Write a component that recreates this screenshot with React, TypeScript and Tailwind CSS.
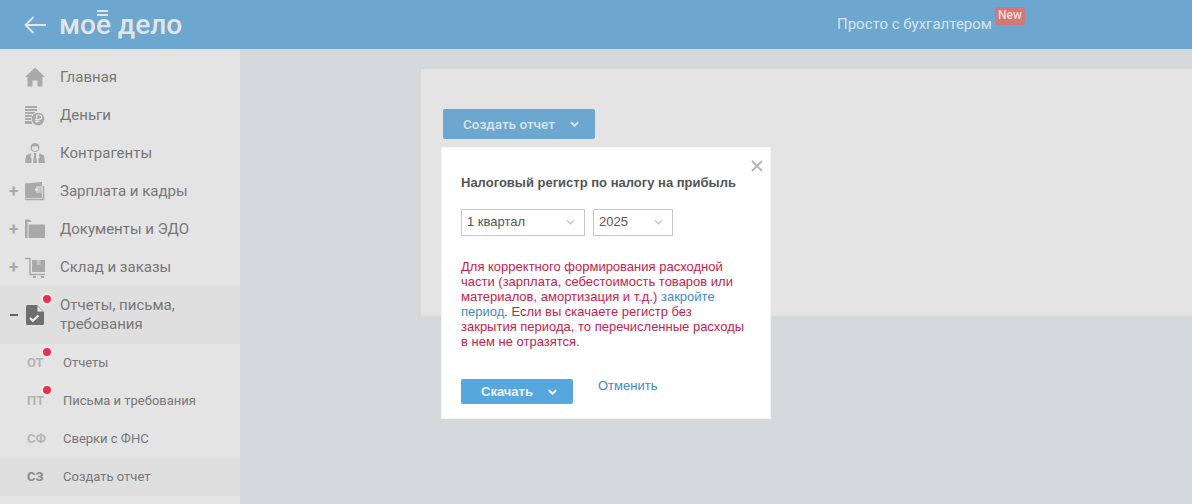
import React from "react";

const Chevron = ({ className }: { className: string }) => (
  <svg viewBox="0 0 10 6" className={className} fill="none" stroke="currentColor" strokeWidth="1.6">
    <path d="M1 1l4 4 4-4" />
  </svg>
);

const BoldChevron = ({ className }: { className: string }) => (
  <svg viewBox="0 0 10 6" className={className} fill="none" stroke="currentColor" strokeWidth="2.2">
    <path d="M1 1l4 4 4-4" />
  </svg>
);

const iconClass = "w-5 h-5 text-[#a9a9a9]";

const HomeIcon = () => (
  <svg viewBox="0 0 20 20" className={iconClass} fill="currentColor">
    <path d="M10 0.5L0 10h2.5v9.5h5v-6h5v6h5V10H20z" />
  </svg>
);

const MoneyIcon = () => (
  <svg viewBox="0 0 20 21" className="w-5 h-[21px] text-[#a9a9a9]" fill="currentColor">
    <path d="M0 1h12v2H0zM0 4h12v2H0zM0 7h10v2H0zM0 10h7v2H0zM0 13h6v2H0zM0 16h7v3H0z" />
    <circle cx="13" cy="14" r="7" fill="#e4e4e4" />
    <circle cx="13" cy="14" r="6.3" />
    <path d="M11.800 18V10h2.500a2.200 2.200 0 010 4.600H10M10 16.500h4.500" fill="none" stroke="#e4e4e4" strokeWidth="1.200" />
  </svg>
);

const PersonIcon = () => (
  <svg viewBox="0 0 20 20" className={iconClass} fill="currentColor">
    <path d="M10 0a4.500 4.500 0 014.500 4.500A4.500 4.500 0 0110 9a4.500 4.500 0 01-4.500-4.500A4.500 4.500 0 0110 0zM7 3.500v1.500a3 3 0 006 0V3.500z" fillRule="evenodd" />
    <path d="M6 10L1 12.500 0 20h6.500V15h-1zM14 10l5 2.500 1 7.500h-6.500V15h1zM8.500 10h3L11 12l1 8H8l1-8z" />
  </svg>
);

const WalletIcon = () => (
  <svg viewBox="0 0 20 20" className={iconClass} fill="currentColor">
    <path d="M0 2.500L17 1v4.500H11v6h6V17H0z" />
    <path d="M11 5.500h6v6h-6z" fill="#c8c8c8" />
    <circle cx="11.500" cy="8.500" r="1.600" fill="#e4e4e4" />
    <path d="M18.500 5v13.500H0" fill="none" stroke="currentColor" strokeWidth="1.500" />
  </svg>
);

const FolderIcon = () => (
  <svg viewBox="0 0 20 20" className={iconClass} fill="currentColor">
    <path d="M0 1.500A1 1 0 011 .500h4l1.500 2.500h-4v16H1a1 1 0 01-1-1z" />
    <path d="M3.500 5.500h15.500a1 1 0 011 1V18a1 1 0 01-1 1H3.500z" />
  </svg>
);

const CartIcon = () => (
  <svg viewBox="0 0 20 21" className="w-5 h-[21px] text-[#a9a9a9]" fill="currentColor">
    <path d="M0 1.500h5V17.500h15" fill="none" stroke="currentColor" strokeWidth="1.500" />
    <path d="M7 3h13v12H7z" />
    <path d="M11.500 3h4v5h-4z" fill="#c4c4c4" />
    <path d="M8 19h3v2H8zM16 19h3v2h-3z" />
  </svg>
);

const ReportIcon = () => (
  <svg viewBox="0 0 18 20" className="w-[18px] h-5 text-[#6e6e6e]" fill="currentColor">
    <path d="M1.500 0H11l7 7v11.500a1.500 1.500 0 01-1.500 1.500h-15A1.500 1.500 0 010 18.500v-17A1.500 1.500 0 011.500 0z" />
    <path d="M11.500 1v5.500H17z" fill="#e8e8e8" />
    <path d="M4 13l2.800 2.800 5.700-5.300" fill="none" stroke="#f2f2f2" strokeWidth="2" />
  </svg>
);

const Dot = ({ className }: { className: string }) => (
  <span className={`absolute w-[8px] h-[8px] rounded-full bg-[#e8304f] shadow-[0_0_0_2px_#ececec] ${className}`} />
);

const mainItems = [
  { label: "Главная", icon: <HomeIcon /> },
  { label: "Деньги", icon: <MoneyIcon /> },
  { label: "Контрагенты", icon: <PersonIcon /> },
  { label: "Зарплата и кадры", icon: <WalletIcon />, plus: true },
  { label: "Документы и ЭДО", icon: <FolderIcon />, plus: true },
  { label: "Склад и заказы", icon: <CartIcon />, plus: true },
];

const subItems = [
  { code: "ОТ", label: "Отчеты", dot: true },
  { code: "ПТ", label: "Письма и требования", dot: true },
  { code: "СФ", label: "Сверки с ФНС" },
  { code: "СЗ", label: "Создать отчет", active: true },
];

export default function App() {
  return (
    <div className="w-[1192px] h-[504px] overflow-hidden flex flex-col bg-[#d6d9dc] font-['Roboto',sans-serif]">
      {/* шапка */}
      <header className="h-[49px] shrink-0 bg-[#6ca7cf] flex items-center">
        <svg viewBox="0 0 22 18" className="w-[22px] h-[18px] ml-[24px] text-[#e4e4e4]" fill="none" stroke="currentColor" strokeWidth="1.800">
          <path d="M22 9H1.500M9.500 1L1.500 9l8 8" />
        </svg>
        <div className="relative ml-[13px] w-[123px] text-[28px] leading-[49px] font-medium text-[#e4e4e4] font-['Roboto',sans-serif] whitespace-nowrap">
          мое дело
          <span className="absolute left-[38px] top-[10px] w-[11px] h-[6px] border-y-2 border-[#e4e4e4]" />
        </div>
        <div className="relative ml-[655px] text-[15px] text-[#d9e4ea]">
          Просто с бухгалтером
          <span className="absolute left-[158px] -top-[6px] h-[18px] w-[30px] text-center rounded-[3px] bg-[#d67777] text-[12px] leading-[17px] font-medium text-[#ecdcdc]">
            New
          </span>
        </div>
      </header>

      <div className="flex flex-1 min-h-0">
        {/* меню */}
        <aside className="w-[240px] shrink-0 bg-[#e4e4e4] pt-[9px] text-[#777]">
          {mainItems.map((item) => (
            <div key={item.label} className="h-[38px] flex items-center text-[15px]">
              <span className="w-[25px] pl-[9px] text-[17px] leading-none font-bold text-[#a9a9a9]">{item.plus ? "+" : ""}</span>
              <span className="w-[35px] flex">{item.icon}</span>
              <span>{item.label}</span>
            </div>
          ))}
          <div className="h-[58px] bg-[#dfdfdf] flex items-center text-[15px] leading-[19px]">
            <span className="w-[26px] pl-[10px] text-[#666]">
              <span className="block w-[8px] h-[2px] bg-[#666]" />
            </span>
            <span className="relative w-[34px] flex">
              <ReportIcon />
              <Dot className="left-[17px] -top-[10px]" />
            </span>
            <span>
              Отчеты, письма,
              <br />
              требования
            </span>
          </div>
          {subItems.map((item) => (
            <div key={item.code} className={`h-[38px] flex items-center text-[13px] ${item.active ? "bg-[#dfdfdf]" : ""}`}>
              <span className={`relative w-[63px] pl-[27px] text-[13px] font-bold ${item.active ? "text-[#8a8a8a]" : "text-[#b5b5b5]"}`}>
                {item.code}
                {item.dot && <Dot className="left-[43px] -top-[5px]" />}
              </span>
              <span>{item.label}</span>
            </div>
          ))}
        </aside>

        {/* контент */}
        <main className="relative flex-1 pt-[20px] pl-[181px]">
          <div className="h-[247px] bg-[#e4e4e4] pt-[40px] pl-[22px]">
            <button className="w-[152px] h-[30px] rounded-[2px] bg-[#6ca7cf] flex items-center pl-[20px] text-[13.5px] font-medium text-[#d9e4ea]">
              Создать отчет
              <BoldChevron className="w-[9px] h-[6px] ml-[15px] text-[#d9e4ea]" />
            </button>
          </div>

          <div className="absolute left-[201px] top-[98px] w-[330px] h-[272px] bg-white border border-[#f4f4f4] pt-[27px] pl-[19px] pr-[20px] font-['Liberation_Sans',sans-serif]">
            <svg viewBox="0 0 12 12" className="absolute right-[7px] top-[12px] w-[12px] h-[12px] text-[#b5b5b5]" fill="none" stroke="currentColor" strokeWidth="1.800">
              <path d="M1 1l10 10M11 1L1 11" />
            </svg>
            <h2 className="text-[13px] leading-[16px] font-bold text-[#555]">Налоговый регистр по налогу на прибыль</h2>
            <div className="flex gap-[8px] mt-[18px]">
              <div className="w-[124px] h-[27px] border border-[#c8c8c8] flex items-center justify-between pl-[5px] pr-[9px] pb-[1px] text-[13px] text-[#555]">
                1 квартал
                <Chevron className="w-[9px] h-[6px] text-[#c8c8c8]" />
              </div>
              <div className="w-[80px] h-[27px] border border-[#c8c8c8] flex items-center justify-between pl-[5px] pr-[9px] pb-[1px] text-[13px] text-[#555]">
                2025
                <Chevron className="w-[9px] h-[6px] text-[#c8c8c8]" />
              </div>
            </div>
            <p className="mt-[23px] text-[13px] leading-[15px] text-[#cc2149] whitespace-nowrap">
              Для корректного формирования расходной
              <br />
              части (зарплата, себестоимость товаров или
              <br />
              материалов, амортизация и т.д.) <span className="text-[#3f8bc4]">закройте</span>
              <br />
              <span className="text-[#3f8bc4]">период</span>. Если вы скачаете регистр без
              <br />
              закрытия периода, то перечисленные расходы
              <br />
              в нем не отразятся.
            </p>
            <div className="flex mt-[30px]">
              <button className="w-[112px] h-[25px] rounded-[2px] bg-[#55a7de] flex items-center pl-[20px] text-[13px] font-bold text-[#eef5fa]">
                Скачать
                <BoldChevron className="w-[9px] h-[6px] ml-[15px] text-[#eef5fa]" />
              </button>
              <span className="ml-[25px] -mt-[1px] text-[13px] leading-[16px] text-[#3f8bc4]">Отменить</span>
            </div>
          </div>
        </main>
      </div>
    </div>
  );
}
